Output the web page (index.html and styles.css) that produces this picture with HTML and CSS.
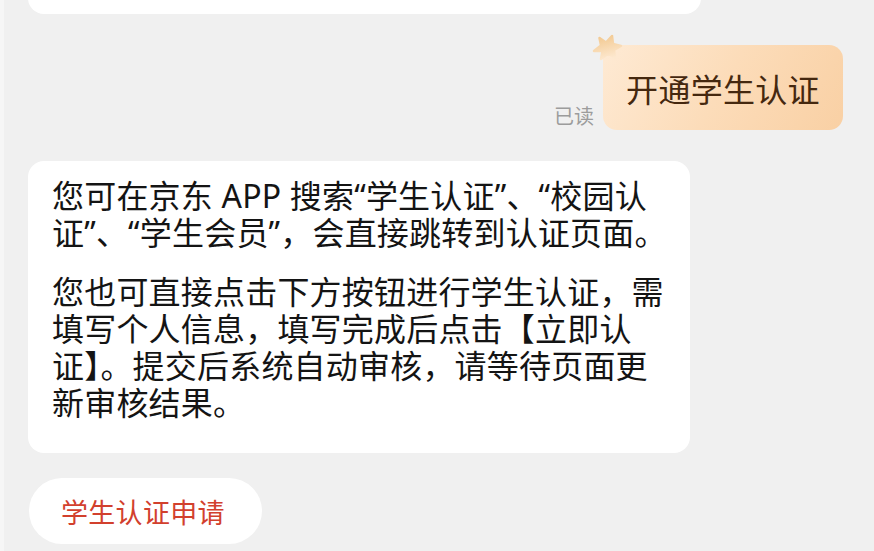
FILE: index.html
```html
<!DOCTYPE html>
<html lang="zh-CN">
<head>
    <meta charset="UTF-8">
    <meta name="viewport" content="width=device-width, initial-scale=1.0">
    <title>客服对话</title>
    <link rel="stylesheet" href="styles.css">
</head>
<body>
    <div class="chat">
        <div class="bubble bubble-prev"></div>

        <div class="row row-mine">
            <span class="read-mark">已读</span>
            <div class="bubble bubble-mine">
                <svg class="bubble-star" width="34" height="32" viewBox="0 0 34 32">
                    <defs>
                        <linearGradient id="starFill" x1="0.2" y1="0" x2="0.5" y2="1">
                            <stop offset="0" stop-color="#f2c88f"/>
                            <stop offset="1" stop-color="#fde8cf"/>
                        </linearGradient>
                    </defs>
                    <path d="M22 3 L23 11 L31 13 L24 17 L25 25 L18.5 20.5 L11 26 L12.5 18 L4 18 L11 12.5 L9.5 5 L16 9.5 Z"
                          fill="url(#starFill)" stroke="url(#starFill)" stroke-width="2.5" stroke-linejoin="round"/>
                </svg>
                开通学生认证
            </div>
        </div>

        <div class="bubble bubble-reply">
            <p>您可在京东 APP 搜索“学生认证”、“校园认<br>证”、“学生会员”，会直接跳转到认证页面。</p>
            <p>您也可直接点击下方按钮进行学生认证，需<br>填写个人信息，填写完成后点击【立即认<br>证】。提交后系统自动审核，请等待页面更<br>新审核结果。</p>
        </div>

        <div class="quick-actions">
            <button class="quick-btn">学生认证申请</button>
        </div>
    </div>
</body>
</html>
```

FILE: styles.css
```css
* {
    margin: 0;
    padding: 0;
    box-sizing: border-box;
}

body {
    font-family: "Noto Sans", "Noto Sans CJK SC", sans-serif;
    background: #f0f0f0;
    border-left: 4px solid #f6f6f6;
    min-height: 100vh;
    overflow: hidden;
}

.chat {
    display: flex;
    flex-direction: column;
    padding: 0 31px 0 24px;
}

.bubble {
    background: #fff;
    border-radius: 16px;
}

.bubble-prev {
    width: 673px;
    height: 60px;
    margin-top: -46px;
}

.row {
    display: flex;
    align-items: flex-end;
}

.row-mine {
    justify-content: flex-end;
    gap: 9px;
    margin-top: 31px;
}

.read-mark {
    font-size: 20px;
    line-height: 24px;
    color: #9c9c9c;
    margin-bottom: 1px;
}

.bubble-mine {
    position: relative;
    width: 240px;
    height: 85px;
    display: flex;
    align-items: center;
    justify-content: center;
    background: linear-gradient(120deg, #feead4 0%, #fcdcb9 50%, #f9d0a4 100%);
    border-radius: 14px;
    color: #45280f;
    font-size: 32px;
    letter-spacing: 0.3px;
}

.bubble-star {
    position: absolute;
    left: -13px;
    top: -12px;
}

.bubble-reply {
    width: 662px;
    margin-top: 31px;
    padding: 16px 20px 32px 24px;
    color: #141414;
    font-size: 32px;
    line-height: 37px;
    letter-spacing: 0.2px;
}

.bubble-reply p + p {
    margin-top: 22px;
}

.quick-actions {
    display: flex;
    margin-top: 25px;
}

.quick-btn {
    font-family: inherit;
    border: none;
    background: #fff;
    color: #d2402d;
    font-size: 27px;
    letter-spacing: 0.3px;
    height: 66px;
    padding: 0 37px 0 32px;
    border-radius: 33px;
    margin-left: 1px;
}
```
